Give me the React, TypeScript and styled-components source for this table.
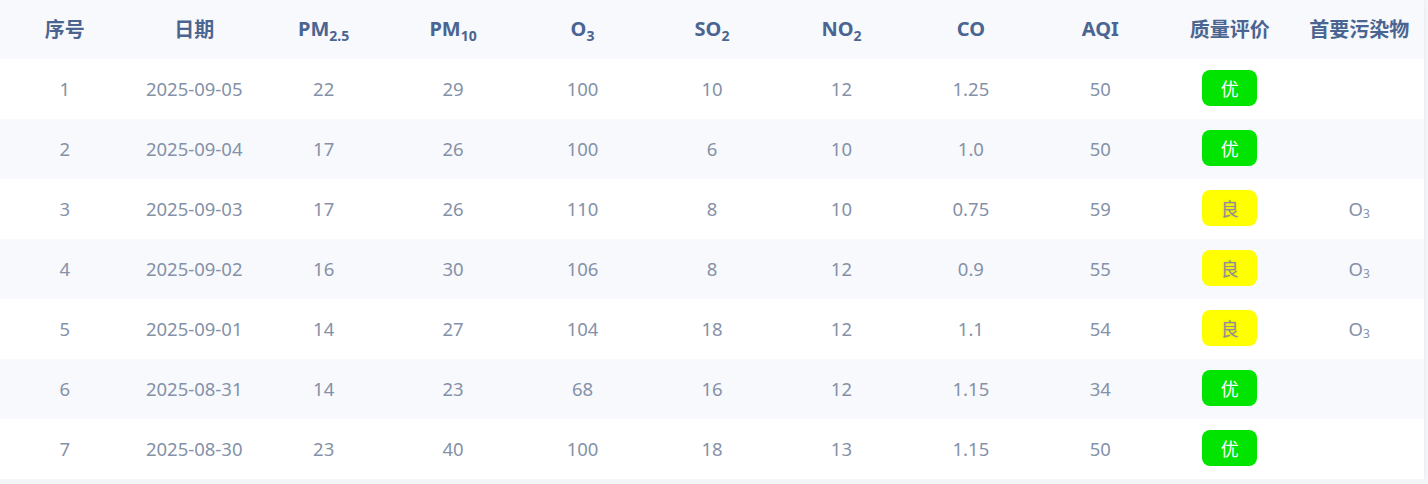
import { FC } from "react";
import styled, { createGlobalStyle } from "styled-components";

type Level = "good" | "fine";

interface Row {
  id: number;
  date: string;
  pm25: number;
  pm10: number;
  o3: number;
  so2: number;
  no2: number;
  co: string;
  aqi: number;
  level: Level;
  primary: boolean;
}

const rows: Row[] = [
  { id: 1, date: "2025-09-05", pm25: 22, pm10: 29, o3: 100, so2: 10, no2: 12, co: "1.25", aqi: 50, level: "good", primary: false },
  { id: 2, date: "2025-09-04", pm25: 17, pm10: 26, o3: 100, so2: 6, no2: 10, co: "1.0", aqi: 50, level: "good", primary: false },
  { id: 3, date: "2025-09-03", pm25: 17, pm10: 26, o3: 110, so2: 8, no2: 10, co: "0.75", aqi: 59, level: "fine", primary: true },
  { id: 4, date: "2025-09-02", pm25: 16, pm10: 30, o3: 106, so2: 8, no2: 12, co: "0.9", aqi: 55, level: "fine", primary: true },
  { id: 5, date: "2025-09-01", pm25: 14, pm10: 27, o3: 104, so2: 18, no2: 12, co: "1.1", aqi: 54, level: "fine", primary: true },
  { id: 6, date: "2025-08-31", pm25: 14, pm10: 23, o3: 68, so2: 16, no2: 12, co: "1.15", aqi: 34, level: "good", primary: false },
  { id: 7, date: "2025-08-30", pm25: 23, pm10: 40, o3: 100, so2: 18, no2: 13, co: "1.15", aqi: 50, level: "good", primary: false },
];

const App: FC = () => {
  return (
    <>
      <GlobalStyle />
      <TableWrapper>
        <Table>
          <thead>
            <HeadRow>
              <Th>序号</Th>
              <Th>日期</Th>
              <Th>PM<HeadSub>2.5</HeadSub></Th>
              <Th>PM<HeadSub>10</HeadSub></Th>
              <Th>O<HeadSub>3</HeadSub></Th>
              <Th>SO<HeadSub>2</HeadSub></Th>
              <Th>NO<HeadSub>2</HeadSub></Th>
              <Th>CO</Th>
              <Th>AQI</Th>
              <Th>质量评价</Th>
              <Th>首要污染物</Th>
            </HeadRow>
          </thead>
          <tbody>
            {rows.map((r) => (
              <BodyRow key={r.id} $striped={r.id % 2 === 0}>
                <Td>{r.id}</Td>
                <Td>{r.date}</Td>
                <Td>{r.pm25}</Td>
                <Td>{r.pm10}</Td>
                <Td>{r.o3}</Td>
                <Td>{r.so2}</Td>
                <Td>{r.no2}</Td>
                <Td>{r.co}</Td>
                <Td>{r.aqi}</Td>
                <Td>
                  <Badge $level={r.level}>{r.level === "good" ? "优" : "良"}</Badge>
                </Td>
                <Td>
                  {r.primary && (
                    <>
                      O<BodySub>3</BodySub>
                    </>
                  )}
                </Td>
              </BodyRow>
            ))}
          </tbody>
        </Table>
      </TableWrapper>
    </>
  );
};

export default App;

// styled-components
const GlobalStyle = createGlobalStyle`
  html, body {
    margin: 0;
    padding: 0;
    background: #f3f5f8;
  }
  body {
    font-family: "Noto Sans", "Noto Sans CJK SC", sans-serif;
  }
`;

const TableWrapper = styled.div`
  width: 1424px;
  background: #fff;
  box-shadow: 0 1px 4px rgba(0, 0, 0, 0.06);
`;

const Table = styled.table`
  width: 100%;
  border-collapse: collapse;
  table-layout: fixed;
`;

const HeadRow = styled.tr`
  height: 59px;
  background: #f7f9fc;
`;

const Th = styled.th`
  padding: 0 0 2px;
  text-align: center;
  font-size: 20px;
  font-weight: 700;
  color: #4a6591;
  white-space: nowrap;
`;

const HeadSub = styled.sub`
  font-size: 14px;
  vertical-align: -5px;
  line-height: 0;
`;

const BodyRow = styled.tr<{ $striped: boolean }>`
  height: 60px;
  background: ${(p) => (p.$striped ? "#f7f9fc" : "#fff")};
`;

const Td = styled.td`
  padding: 0 0 2px;
  text-align: center;
  font-size: 18.5px;
  color: #8591a8;
`;

const BodySub = styled.sub`
  font-size: 12px;
  vertical-align: -2px;
  line-height: 0;
`;

const Badge = styled.span<{ $level: Level }>`
  display: inline-flex;
  align-items: center;
  justify-content: center;
  width: 55px;
  height: 36px;
  border-radius: 8px;
  font-size: 18px;
  background: ${(p) => (p.$level === "good" ? "#00e400" : "#ffff00")};
  color: ${(p) => (p.$level === "good" ? "#fff" : "#8c8c9c")};
  text-shadow: ${(p) => (p.$level === "good" ? "none" : "0 0 3px rgba(0,0,0,0.15)")};
  vertical-align: middle;
`;
